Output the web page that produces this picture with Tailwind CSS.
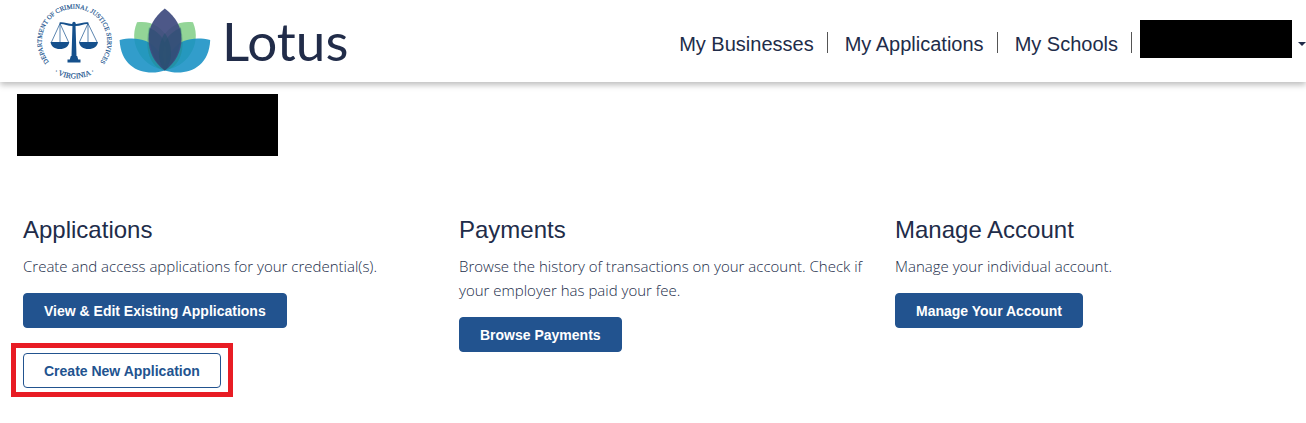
<!DOCTYPE html>
<html lang="en">
  <head>
    <meta charset="UTF-8" />
    <meta name="viewport" content="width=device-width, initial-scale=1.0" />
    <title>Lotus - Department of Criminal Justice Services</title>
    <script src="https://cdn.jsdelivr.net/npm/@tailwindcss/browser@4"></script>
  </head>
  <body class="bg-white min-h-screen overflow-x-hidden font-['Liberation_Sans',Arial,sans-serif] text-[#212c49]">
    <header class="flex items-center justify-between h-[82px] pl-9 shadow-[0_3px_6px_0_rgba(0,0,0,0.26)]">
      <a href="#" class="flex items-center shrink-0" aria-label="Lotus home">
        <!-- DCJS seal -->
        <svg class="w-[78px] h-[82px]" viewBox="0 0 78 82" fill="#15508c">
          <defs>
            <path id="sealTop" d="M14.200 63.500 A32.800 32.800 0 1 1 62.800 63.500" />
            <path id="sealBottom" d="M12 67.500 A37.500 37.500 0 0 0 65 67.500" />
          </defs>
          <g font-family="Liberation Serif, Times New Roman, serif" stroke="#15508c" stroke-width=".15">
            <text font-size="6.600"><textPath href="#sealTop" startOffset="50%" text-anchor="middle">DEPARTMENT OF CRIMINAL JUSTICE SERVICES</textPath></text>
            <text font-size="7.600"><textPath href="#sealBottom" startOffset="50%" text-anchor="middle">· VIRGINIA ·</textPath></text>
          </g>
          <circle cx="38" cy="23.500" r="1.700" />
          <path d="M36.500 25h3l1 31h-5z" />
          <path d="M34.800 56h6.400l1 3.500h2.300v3H31.500v-3h2.300z" />
          <path d="M23.500 22.500c5-.8 8.500 2.200 14.500 1.300 6 .9 9.500-2.100 14.500-1.300l-.5 1.500c-4.600-.3-8 2.500-14 1.900-6 .6-9.400-2.200-14-1.900z" />
          <path d="M24 23.500 15.500 42M24 23.500V42M24 23.500 32.500 42M52 23.500 43.500 42M52 23.500V42M52 23.500 61 42" fill="none" stroke="#15508c" stroke-width=".7" />
          <path d="M14.500 42h18.800c-.6 4.400-4.300 7-9.400 7s-8.800-2.600-9.400-7zM43 42h19c-.6 4.400-4.300 7-9.500 7S43.600 46.400 43 42z" />
        </svg>
        <!-- lotus flower -->
        <svg class="w-[104px] h-[82px]" viewBox="114 0 104 82">
          <path d="M137 22.300C150 20.500 163 26 168 40c4 11 2 22-3.500 30C145 68 127 46 137 22.300z" fill="#93d597" />
          <path d="M193 22.300C180 20.500 167 26 162 40c-4 11-2 22 3.500 30C185 68 203 46 193 22.300z" fill="#93d597" />
          <path d="M119.600 40c16-3.500 29-.5 37 9 5.500 6.500 8 14 8.400 21.500C146 76.500 121 70 119.600 40z" fill="#1690c4" fill-opacity=".88" />
          <path d="M210.200 40c-16-3.500-29-.5-37 9-5.500 6.500-8 14-8.400 21.500C184 76.500 209 70 210.200 40z" fill="#1690c4" fill-opacity=".88" />
          <path d="M149 27c10 5 17 14 17.500 25 .3 7-.8 13-2 18.500C150 67 144 50 149 27zM180.800 27c-10 5-17 14-17.500 25-.3 7 .8 13 2 18.500C180 67 186 50 180.800 27z" fill="#22806f" fill-opacity=".3" />
          <path d="M164.800 8.500C176 17 181.500 27 181.500 39s-6 24-16.700 31.500C154 63 148.500 51 148.500 39S154 17 164.800 8.500z" fill="#3f4b7f" fill-opacity=".93" />
          <path d="M149 28c8 3 13 8 15.800 14.500C167.600 36 173 31 181 28c1.500 17-5 34-16.200 42.500C154 62 147.500 45 149 28z" fill="#22506f" fill-opacity=".4" />
          <path d="M164.800 33C172 44 174 60 164.800 70.500 156 60 158 44 164.800 33z" fill="#275070" fill-opacity=".6" />
        </svg>
        <span class="pl-1 font-['Lato',sans-serif] font-normal text-[53px] leading-[82px]">Lotus</span>
      </a>

      <nav class="flex items-center shrink-0 text-xl">
        <a href="#" class="mt-0.5 pt-1 pr-[13px] mr-[17px] border-r border-[#555] leading-[17px]">My Businesses</a>
        <a href="#" class="mt-0.5 pt-1 pr-[13px] mr-[17px] border-r border-[#555] leading-[17px]">My Applications</a>
        <a href="#" class="mt-0.5 pt-1 pr-[13px] mr-2 border-r border-[#555] leading-[17px]">My Schools</a>
        <button type="button" class="flex items-center -mr-1 mb-1" aria-label="Account menu">
          <span class="w-[152px] h-[38px] bg-black"></span>
          <svg class="ml-1.5 mt-2 w-3 h-2" viewBox="0 0 12 8" fill="#212c49"><path d="M0 3h8L4 7z" /></svg>
        </button>
      </nav>
    </header>

    <main class="pl-[23px] pt-3">
      <div class="-ml-1.5 w-[261px] h-[62px] bg-black"></div>

      <div class="grid grid-cols-3 gap-[25px] pt-[58px]">
        <section>
          <h2 class="text-2xl">Applications</h2>
          <p class="mt-2 mb-[15px] font-['Open_Sans',sans-serif] font-light text-[15px] leading-6">Create and access applications for your credential(s).</p>
          <button type="button" class="block h-[35px] px-5 border border-[#22538f] rounded bg-[#22538f] text-white text-sm font-bold">View &amp; Edit Existing Applications</button>
          <div class="-ml-3 mt-[15px] w-fit border-5 border-[#e81c24] pt-[5px] pb-1 px-[7px]">
            <button type="button" class="block h-[35px] px-5 border border-[#22538f] rounded bg-white text-[#22538f] text-sm font-bold">Create New Application</button>
          </div>
        </section>

        <section>
          <h2 class="text-2xl">Payments</h2>
          <p class="mt-2 mb-[15px] font-['Open_Sans',sans-serif] font-light text-[15px] leading-6">Browse the history of transactions on your account. Check if your employer has paid your fee.</p>
          <button type="button" class="block h-[35px] px-5 border border-[#22538f] rounded bg-[#22538f] text-white text-sm font-bold">Browse Payments</button>
        </section>

        <section>
          <h2 class="text-2xl">Manage Account</h2>
          <p class="mt-2 mb-[15px] font-['Open_Sans',sans-serif] font-light text-[15px] leading-6">Manage your individual account.</p>
          <button type="button" class="block h-[35px] px-5 border border-[#22538f] rounded bg-[#22538f] text-white text-sm font-bold">Manage Your Account</button>
        </section>
      </div>
    </main>
  </body>
</html>
